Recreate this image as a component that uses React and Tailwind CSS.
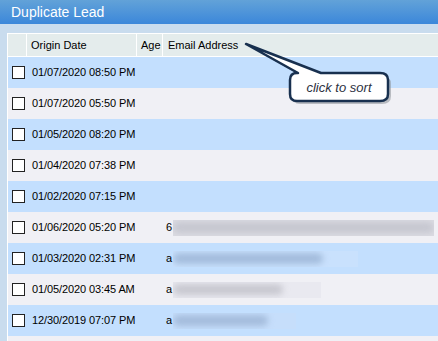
import React from "react";

const rows = [
  { date: "01/07/2020 08:50 PM" },
  { date: "01/07/2020 05:50 PM" },
  { date: "01/05/2020 08:20 PM" },
  { date: "01/04/2020 07:38 PM" },
  { date: "01/02/2020 07:15 PM" },
  { date: "01/06/2020 05:20 PM", lead: "6", box: "w-[261px]", boxBg: "bg-[#dcdce3]", blur: "w-[262px] bg-[#c6c7d0]" },
  { date: "01/03/2020 02:31 PM", lead: "a", box: "w-[185px]", boxBg: "bg-[#c9e1fd]", blur: "w-[150px] bg-[#a3bcdc]" },
  { date: "01/05/2020 03:45 AM", lead: "a", box: "w-[148px]", boxBg: "bg-[#e9e9f0]", blur: "w-[110px] bg-[#c8c8d0]" },
  { date: "12/30/2019 07:07 PM", lead: "a", box: "w-[123px]", boxBg: "bg-[#c6defb]", blur: "w-[95px] bg-[#a4bcdc]" },
  { date: "" },
];

function Checkbox() {
  return <div className="w-[13px] h-[13px] border border-[#222] bg-white shrink-0" />;
}

export default function App() {
  return (
    <div
      className="w-[438px] h-[341px] overflow-hidden relative bg-[#c9dcee]"
      style={{ fontFamily: '"Liberation Sans", Arial, sans-serif' }}
    >
      {/* title bar */}
      <div className="h-[24px] bg-gradient-to-b from-[#62a2d8] to-[#3b87da] flex items-center pl-[11px]">
        <span className="text-white text-[14px] leading-none">Duplicate Lead</span>
      </div>

      <div className="pl-[7px] pt-[9px]">
        <div className="border-t border-l border-white">
          {/* header */}
          <div className="flex h-[23px] bg-[#e4ecec] border-b border-white text-[11px] text-black">
            <div className="w-[19px] border-r border-white" />
            <div className="w-[110px] border-r border-white flex items-center pl-[4px]">Origin Date</div>
            <div className="w-[26px] border-r border-white flex items-center pl-[4px]">Age</div>
            <div className="flex-1 flex items-center pl-[5px]">Email Address</div>
          </div>

          {/* rows */}
          {rows.map((r, i) => (
            <div
              key={i}
              className={`flex items-center h-[31px] text-[11px] text-black ${i % 2 === 0 ? "bg-[#c3dffe]" : "bg-[#f0f0f5]"}`}
            >
              <div className="w-[20px] pl-[4px]">
                <Checkbox />
              </div>
              <div className="w-[138px] pl-[4px] tracking-[-0.1px]">{r.date}</div>
              {r.lead && (
                <div className="flex items-center">
                  <span className="w-[7px]">{r.lead}</span>
                  <div className={`${r.box} h-[16px] ${r.boxBg} overflow-hidden flex items-center`}>
                    <div className={`${r.blur} h-[11px] blur-[3px] rounded-full`} />
                  </div>
                </div>
              )}
            </div>
          ))}
        </div>
      </div>

      {/* tooltip callout */}
      <div className="absolute left-[238px] top-[38px] w-[160px] h-[74px]">
        <svg width="160" height="74" viewBox="238 38 160 74" className="absolute inset-0">
          <path
            d="M 301 76 L 246 44 L 324 76 L 382 76 Q 391 76 391 84 L 391 96 Q 391 104 382 104 L 300 104 Q 292 104 292 96 L 292 84 Q 292 76 300 76 Z"
            fill="#8a8f96"
            opacity="0.55"
          />
          <path
            d="M 298 73 L 246 44 L 321 73 L 380 73 Q 388 73 388 80 L 388 94 Q 388 101 380 101 L 297 101 Q 290 101 290 94 L 290 80 Q 290 73 297 73 Z"
            fill="white"
            stroke="#18304f"
            strokeWidth="2.5"
            strokeLinejoin="round"
          />
        </svg>
        <div className="absolute left-[52px] top-[37px] w-[98px] h-[26px] flex items-center justify-center">
          <span className="italic text-[13px] text-[#2b3040]">click to sort</span>
        </div>
      </div>
    </div>
  );
}
